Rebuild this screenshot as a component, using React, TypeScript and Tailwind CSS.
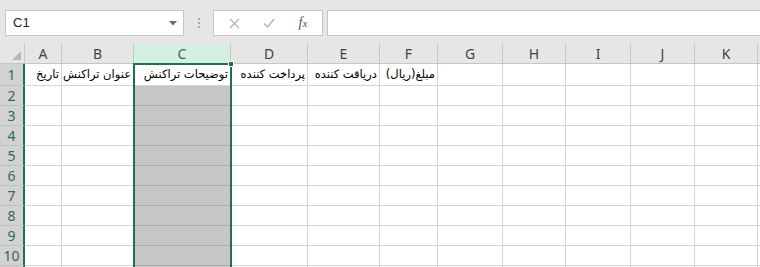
import React from "react";

const cols = [
  { l: "A", w: 37 },
  { l: "B", w: 72 },
  { l: "C", w: 97 },
  { l: "D", w: 77 },
  { l: "E", w: 72 },
  { l: "F", w: 58 },
  { l: "G", w: 65 },
  { l: "H", w: 63 },
  { l: "I", w: 65 },
  { l: "J", w: 64 },
  { l: "K", w: 63 },
  { l: "", w: 64 },
];

const row1: Record<string, string> = {
  A: "تاریخ",
  B: "عنوان تراکنش",
  C: "توضیحات تراکنش",
  D: "پرداخت کننده",
  E: "دریافت کننده",
  F: "مبلغ(ریال)",
};

const rows = [1, 2, 3, 4, 5, 6, 7, 8, 9, 10, 11];

export default function App() {
  return (
    <div className="w-[760px] h-[267px] overflow-hidden bg-[#e6e6e6] font-['Noto_Sans',sans-serif]">
      {/* Formula bar row */}
      <div className="h-[44px] flex items-start pt-[10px] pl-[5px]">
        <div className="w-[179px] h-[26px] bg-white border border-[#c6c6c6] flex items-center justify-between pl-[7px] pr-[6px]">
          <span className="text-[13px] text-[#222] font-['Liberation_Sans',sans-serif]">C1</span>
          <svg width="8" height="5" viewBox="0 0 8 5">
            <path d="M0 0 L8 0 L4 4.5 Z" fill="#6b6b6b" />
          </svg>
        </div>
        <div className="w-[29px] h-[26px] flex flex-col items-center justify-center gap-[2px]">
          <div className="w-[2px] h-[2px] bg-[#a8a8a8]" />
          <div className="w-[2px] h-[2px] bg-[#a8a8a8]" />
          <div className="w-[2px] h-[2px] bg-[#a8a8a8]" />
        </div>
        <div className="w-[110px] h-[26px] bg-white border border-[#c6c6c6] flex items-center">
          <div className="w-[38px] flex justify-center pl-[2px]">
            <svg width="11" height="11" viewBox="0 0 11 11">
              <path d="M1 1 L10 10 M10 1 L1 10" stroke="#b3b3b3" strokeWidth="1.3" fill="none" />
            </svg>
          </div>
          <div className="w-[34px] flex justify-center">
            <svg width="12" height="10" viewBox="0 0 12 10">
              <path d="M1 5.5 L4.5 9 L11 1" stroke="#b3b3b3" strokeWidth="1.4" fill="none" />
            </svg>
          </div>
          <div className="flex-1 flex justify-center pr-[2px]">
            <span className="text-[14px] italic text-[#555] font-['Liberation_Serif',serif] leading-none">
              f<span className="text-[11px]">x</span>
            </span>
          </div>
        </div>
        <div className="ml-[4px] flex-1 h-[26px] bg-white border-y border-l border-[#c6c6c6]" />
      </div>

      {/* Grid */}
      <div className="relative bg-white">
        {/* Column headers */}
        <div className="flex h-[20px] bg-[#e6e6e6]">
          <div className="w-[25px] shrink-0 border-r border-b border-[#c6c6c6] flex items-end justify-end pr-[3px] pb-[3px]">
            <svg width="9" height="9" viewBox="0 0 9 9">
              <path d="M9 0 L9 9 L0 9 Z" fill="#b7b7b7" />
            </svg>
          </div>
          {cols.map((c, i) => (
            <div
              key={i}
              style={{ width: c.w }}
              className={`shrink-0 border-r border-b flex items-center justify-center text-[14px] ${
                c.l === "C"
                  ? "bg-[#d3f0e0] text-[#40674f] border-r-[#c6c6c6] border-b-[#217346]"
                  : "text-[#444] border-[#c6c6c6]"
              }`}
            >
              {c.l}
            </div>
          ))}
        </div>

        {/* Rows */}
        {rows.map((r) => (
          <div key={r} className={`flex ${r === 1 ? "h-[22px]" : "h-[20px]"}`}>
            <div className="w-[25px] shrink-0 bg-[#d2d2d2] border-b border-[#c0c0c0] border-r-2 border-r-[#217346] flex items-center justify-center text-[14px] text-[#33694b]">
              {r <= 10 ? r : ""}
            </div>
            {cols.map((c, i) => {
              const txt = r === 1 ? row1[c.l] : undefined;
              const isC = c.l === "C";
              return (
                <div
                  key={i}
                  style={{ width: c.w }}
                  className={`shrink-0 border-r border-b overflow-hidden flex items-center justify-end pr-[2px] pt-[1px] ${
                    isC && r > 1 ? "bg-[#c6c6c6] border-[#ababab]" : "border-[#d4d4d4]"
                  }`}
                >
                  {txt && (
                    <span
                      dir="rtl"
                      className="whitespace-nowrap text-[11.5px] text-black font-['DejaVu_Sans',sans-serif] leading-none"
                    >
                      {txt}
                    </span>
                  )}
                </div>
              );
            })}
          </div>
        ))}

        {/* Selection box over column C */}
        <div className="absolute left-[133px] top-[19px] w-[99px] h-[260px] border-2 border-[#217346] pointer-events-none" />
        <div className="absolute left-[228px] top-[17px] w-[6px] h-[6px] bg-[#217346] border border-white pointer-events-none" />
      </div>
    </div>
  );
}
